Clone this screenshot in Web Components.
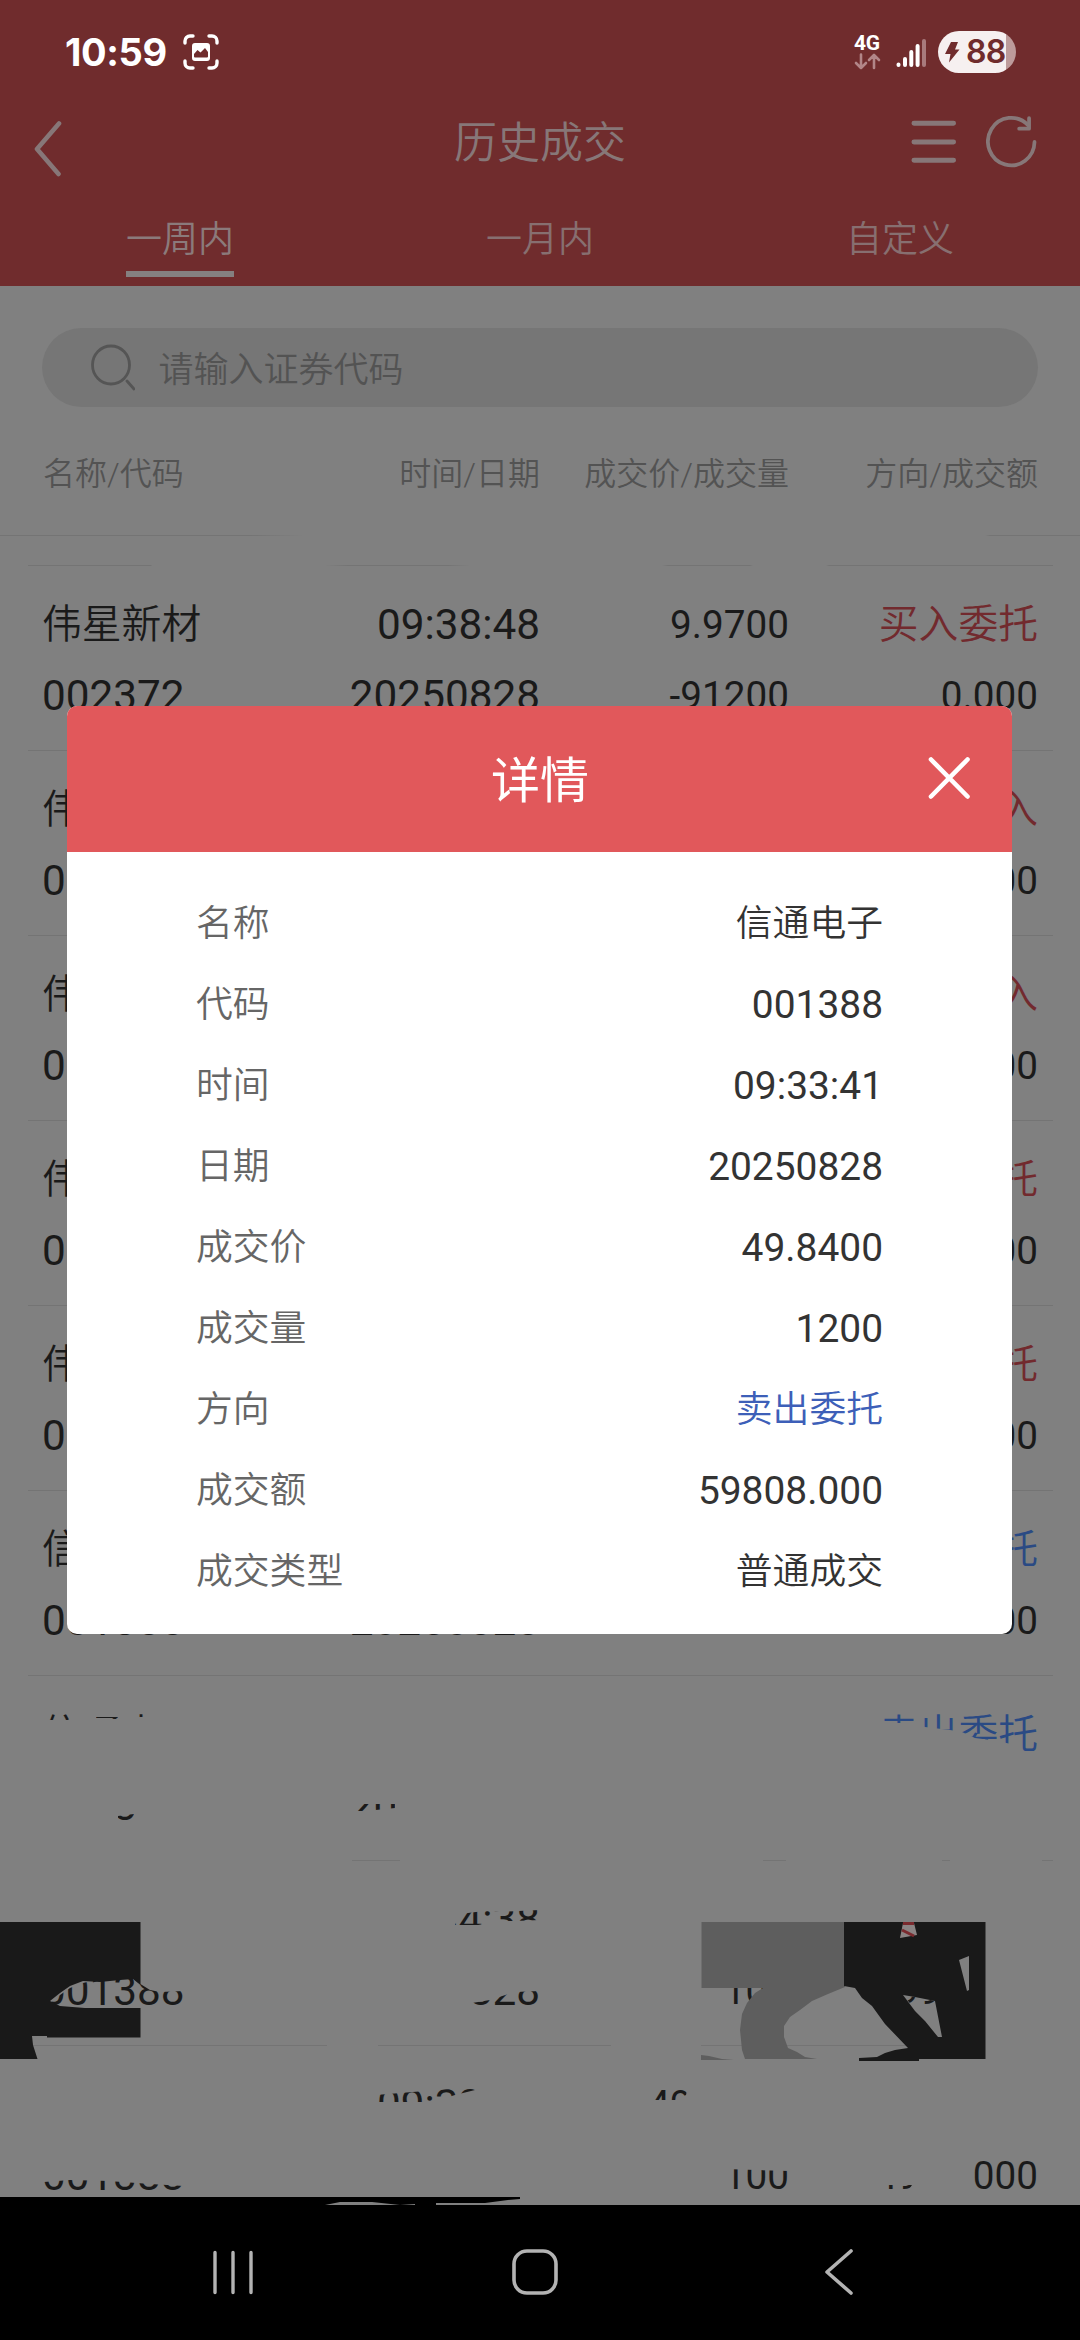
<!DOCTYPE html>
<html lang="zh-CN">
<head>
<meta charset="utf-8">
<title>历史成交</title>
<style>
html,body{margin:0;padding:0;background:#000}
body{width:1080px;height:2340px;overflow:hidden;font-family:Roboto,"Noto Sans CJK SC",sans-serif}
</style>
</head>
<body>
<trade-app></trade-app>
<script>
function define(name, html){
  const t=document.createElement('template');
  t.innerHTML=html;
  customElements.define(name, class extends HTMLElement{
    constructor(){super();this.attachShadow({mode:'open'}).appendChild(t.content.cloneNode(true));}
  });
}

define('status-bar', `<style>
:host{display:flex;height:104px;box-sizing:border-box;color:#fff;justify-content:space-between;align-items:flex-start;padding:31px 64px 0 65px}
.l,.r{display:flex;height:42px;align-items:center}
.time{font:700 38px/42px Inter,sans-serif;width:104px;letter-spacing:-.4px;white-space:nowrap}
.l svg{margin-left:14px}
.net{width:27px;text-align:center;margin-right:15px}
.net b{display:block;font:700 21px/18px Roboto,sans-serif;letter-spacing:-.3px}
.net svg{display:block;margin:1px auto 0}
.sig{margin-right:12.500px}
.bat{display:flex;align-items:center;width:78px;height:42px;border-radius:21px;background:linear-gradient(90deg,#f6f0f0 67.5px,#bd9b9b 67.5px);color:#702c2d;box-sizing:border-box;padding-left:6px;font:600 32px/42px Inter,sans-serif;letter-spacing:-.8px}
.bat svg{margin-right:6px}
</style>
<div class="l"><span class="time">10:59</span>
<svg width="36" height="36" viewBox="0 0 36 36" fill="none"><path d="M2 9V7a5 5 0 0 1 5-5h3M26 2h3a5 5 0 0 1 5 5v2M34 27v2a5 5 0 0 1-5 5h-3M10 34H7a5 5 0 0 1-5-5v-2" stroke="#fff" stroke-width="3.4" stroke-linecap="round"/><path fill-rule="evenodd" fill="#fff" d="M12 9h12a3 3 0 0 1 3 3v12a3 3 0 0 1-3 3H12a3 3 0 0 1-3-3V12a3 3 0 0 1 3-3ZM11 22.500V20l3.500-4 3 2.500 4.500-4.500 3 4v4.500a1 1 0 0 1-1 1H12a1 1 0 0 1-1-1Z"/></svg></div>
<div class="r"><div class="net"><b>4G</b><svg width="27" height="17" viewBox="0 0 27 17" fill="none" stroke="#b28688" stroke-width="2.600" stroke-linecap="round" stroke-linejoin="round"><path d="M7 1.500V15M2 10l5 5 5-5M20 15V2M15 7l5-5 5 5"/></svg></div>
<svg class="sig" width="30" height="32" viewBox="0 0 30 32" stroke-width="4" stroke-linecap="round"><g stroke="#fff"><path d="M2.500 28.500v.5M9 23v6M15.300 16v13M21.600 10v19"/></g><path stroke="#a87a7c" d="M28 5v24"/></svg>
<div class="bat"><svg width="16" height="22" viewBox="0 0 16 22"><path fill="#702c2d" d="M7 1h7l-3 7.500h4.500L5 21.500 6.500 13H1Z"/></svg>88</div></div>`);

define('title-bar', `<style>
:host{display:flex;align-items:center;height:82px;padding:0 43px 0 33px;color:#877778}
.side{display:flex;align-items:center;width:127px}
.side.e{justify-content:flex-end;gap:28px}
.t{flex:1;text-align:center;font-size:43px;line-height:60px;padding-bottom:5px;padding-left:10px;font-weight:350}
svg{display:block}
.e{padding-bottom:7px}
</style>
<div class="side"><svg width="30" height="56" viewBox="0 0 30 56" fill="none" stroke="currentColor" stroke-width="4.600" stroke-linecap="round" stroke-linejoin="round" style="margin-top:8px"><path d="M26 2.500 4 28 25.500 53"/></svg></div>
<div class="t"><slot></slot></div>
<div class="side e"><svg width="48" height="50" viewBox="0 0 48 50" stroke="currentColor" stroke-width="5" stroke-linecap="round"><path d="M4 6h40M4 25h40M4 43.500h40"/></svg>
<svg width="52" height="54" viewBox="0 0 52 54" fill="none" stroke="currentColor" stroke-width="3.800" stroke-linecap="round"><path d="M49 27a23.500 24 0 1 1-6.500-17"/><path d="M43.500 3v10.500H33.500" stroke-linejoin="round"/></svg></div>`);

define('tab-bar', `<style>
:host{display:flex;height:100px;color:#876f70;font-weight:350}
div{flex:1;text-align:center;font-size:36px;line-height:54px}
span{display:inline-block;padding:27px 0 4px;height:54px;border-bottom:6px solid transparent;box-sizing:content-box}
.on span{color:#8b7a7b;border-color:#858080}
</style><div class="on"><span>一周内</span></div><div><span>一月内</span></div><div><span>自定义</span></div>`);

define('search-box', `<style>
:host{display:flex;align-items:center;height:79px;margin:42px 42px 0;border-radius:40px;background:#767676;color:#535353;box-sizing:border-box;padding-left:47px;font-size:35px;line-height:60px;font-weight:350}
svg{margin-right:23.500px}
div{padding-top:6px}
</style><svg width="46" height="48" viewBox="0 0 46 48" fill="none" stroke="#555" stroke-width="2.800" stroke-linecap="round"><ellipse cx="22" cy="21" rx="18.500" ry="19"/><path d="m38 37 7 8"/></svg><div><slot></slot></div>`);

define('list-head', `<style>
:host{display:grid;grid-template-columns:250px 247px 249px 249px;padding:0 42px 0 43px;height:158px;box-sizing:border-box;padding-top:45px;font-size:32px;line-height:44px;color:#535353;font-weight:350;
background:linear-gradient(90deg,#747474 250px,#808080 305px,#808080 985px,#747474 990px) 0 128px/100% 1px no-repeat}
::slotted(*){text-align:right}
::slotted(:first-child){text-align:left}
</style><slot></slot>`);

define('trade-row', `<style>
:host{display:grid;grid-template-columns:251px 247px 249px 249px;margin:0 27px 0 28px;padding:22.500px 14px 0 14px;height:185px;box-sizing:border-box;border-top:1px solid #747474;color:#1a1a1a;line-height:71px;font-size:38.700px}
:host([first]){border-top-color:transparent;background:linear-gradient(90deg,#747474 123px,#808080 124px 297px,#747474 320px 420px,#808080 442px 634px,#747474 640px 722px,#808080 725px 798px,#747474 801px) border-box 0 0/100% 1px no-repeat}
div{text-align:right;display:flex;flex-direction:column;white-space:nowrap}
div.l{text-align:left}
.n{font-size:42.300px}
.c{font-size:39.800px}
.dir{color:#722a2e}
:host([sell]) .dir{color:#2a4a84}
slot{display:block;height:71px}
.c,.dir{font-weight:350}
</style>
<div class="l"><slot class="c" name="name"></slot><slot class="n" name="code"></slot></div>
<div class="n"><slot name="time"></slot><slot name="date"></slot></div>
<div><slot name="price"></slot><slot name="qty"></slot></div>
<div><slot class="c dir" name="dir"></slot><slot name="amt"></slot></div>`);

/* Damaged area at the foot of the list: an erasing layer with windows in it, then the solid blocks. */
define('glitch-layer', `<style>:host{position:absolute;left:0;top:1390px;width:1080px;height:529px;pointer-events:none}svg{display:block}</style>
<svg width="1080" height="529" viewBox="0 1676 1080 529">
<path fill="#808080" fill-rule="evenodd" d="M0 1676H1080V2205H0Z
M44 1712H72V1720H44Z M96 1717H118V1719H96Z M139 1714H144V1717H139Z
M880 1710H1040V1755H1022L1015 1745 998 1741 975 1738 962 1732 950 1730 925 1727 915 1723H880Z
M118 1816 134 1814 134 1822H118Z
M355 1804H395V1808L366 1811H355Z
M352 1860h48v1h-48Z M763 1860h23v1h-23Z M942 1860h8v1h-8Z M1042 1860h11v1h-11Z
M455 1925 460 1914 484 1911 500 1912 540 1910V1920L514 1921H500L478 1925Z
M50 2003 60 1995 70 1988 83 1983 100 1979H133L142 1985 150 1990 160 1992 184 1991V2010H50Z
M472 2003 490 2000 515 1992 540 1991V2008H472Z
M725 1988H765L748 2006H725Z
M903 1995 915 1997 935 2001 942 2037 925 2021Z
M33 2045H327v1H33Z M378 2045H611v1H378Z M701 2045H908v1H701Z
M376 2102V2095L425 2091 475 2087V2090L455 2095 432 2102Z
M650 2086H688L686 2095 675 2100H650Z
M44 2182 70 2180 110 2181 150 2184 184 2186V2192H44Z
M725 2169 789 2171V2192H725Z
M885 2185H912L908 2191H885Z
M974 2162 980 2158H1042V2192H974Z"/>
<path fill="#191919" d="M0 1922H140.500V1985L133 1979 120 1980 100 1982 83 1981 70 1986 60 1993 50 2001 60 2006 85 2008H140.500V2037.500H47V2036H32L33 2045 37.500 2059H0Z"/>
<path fill="#5e5e5e" d="M701.500 1922H845V1987L828 1994 812 2001 800 2010 790 2017 784 2026V2037L788 2048 797 2052 805 2057 817 2059H745L742 2050 740 2030 742 2014 747 2003 755 1993 763 1988H701.500ZM701 2055 709 2056 722 2059 734 2060H701Z"/>
<path fill="#191919" fill-rule="evenodd" d="M844 1922H985.500V2059H919V2061H859V2058L877 2057 885 2053 895 2050 908 2048 885 2024 872 2006 862 1998 855 1988 844 1986ZM959 1960 969 1956V1990L967 1991ZM903 1995 915 1997 935 2001 942 2037H938L925 2021 915 2011Z"/>
<path fill="#8b8484" d="M903 1923H914L917 1935 900 1938Z"/><path d="M903 1923.500H914M902 1930 914 1936" stroke="#7a2a2e" stroke-width="3"/>
<path fill="#000" d="M0 2197H520V2199L508 2200 485 2203 436 2203V2205H415V2204L400 2205 372 2202H340L325 2205H0Z"/>
</svg>`);

define('detail-row', `<style>
:host{display:flex;justify-content:space-between;height:81px;line-height:81px;font-size:36.800px;color:#333;font-weight:350}
.k{color:#666}
.v{color:#333}
:host([num]) .v{font-size:38.900px;font-weight:400}
:host([sell]) .v{color:#3d5fb8}
</style><span class="k"><slot name="k"></slot></span><span class="v"><slot></slot></span>`);

define('detail-modal', `<style>
:host{display:block;position:absolute;left:67px;top:706px;width:945px;height:928px;border-radius:10px;overflow:hidden;background:#fff}
header{display:flex;align-items:center;height:146px;background:#e1585b;color:#fff;padding:0 40px 0 41px;box-sizing:border-box}
h2{flex:1;margin:0;padding-left:46px;text-align:center;font-weight:400;font-size:49px;line-height:80px;padding-top:6px}
main{padding:30.500px 129px 0 129px}
</style><header><h2><slot name="title"></slot></h2><svg width="46" height="46" viewBox="0 0 46 46" stroke="#fff" stroke-width="4.600" stroke-linecap="round"><path d="M5 3.500 41.500 40.500M41.500 3.500 5 40.500"/></svg></header><main><slot></slot></main>`);

define('nav-bar', `<style>:host{display:flex;height:135px;background:#000;padding:0 226px 0 211px;align-items:flex-start;box-sizing:border-box}svg{margin-top:42px}.h{margin-left:255px}.b{margin-left:auto}</style>
<svg width="44" height="50" viewBox="0 0 44 50" stroke="#b3b3b3" stroke-width="3.400" stroke-linecap="round"><path d="M4 5.500v40M22 5.500v40M40 5.500v40"/></svg>
<svg class="h" width="50" height="50" viewBox="0 0 50 50" fill="none" stroke="#b3b3b3" stroke-width="3.600"><rect x="4" y="4" width="42" height="42" rx="13"/></svg>
<svg class="b" width="30" height="50" viewBox="0 0 30 50" fill="none" stroke="#b3b3b3" stroke-width="3.600" stroke-linecap="round" stroke-linejoin="round"><path d="M27 4 3 25l24 21"/></svg>`);

const row=(attr,name,code,time,date,price,qty,dir,amt)=>`<trade-row ${attr}>`+
  Object.entries({name,code,time,date,price,qty,dir,amt}).map(([k,v])=>`<span slot="${k}">${v}</span>`).join('')+`</trade-row>`;
const W='伟星新材', X='信通电子', D='20250828';
const rows=[
 row('first',W,'002372','09:38:48',D,'9.9700','-91200','买入委托','0.000'),
 row('',W,'002372','','','','','证券买入','0.000'),
 row('',W,'002372','','','','','证券买入','0.000'),
 row('',W,'002372','','','','','买入委托','0.000'),
 row('',W,'002372','','','','','买入委托','0.000'),
 row('sell',X,'001388','',D,'','300','卖出委托','14952.000'),
 row('sell',X,'001388','',D,'','','卖出委托',''),
 row('sell','','001388','09:34:38',D,'','100','','4993.000'),
 row('sell','','001388','09:33:41','','49.8400','100','','4984.000')
].join('');
const detail=[['名称',X,''],['代码','001388','num'],['时间','09:33:41','num'],['日期',D,'num'],['成交价','49.8400','num'],['成交量','1200','num'],['方向','卖出委托','sell'],['成交额','59808.000','num'],['成交类型','普通成交','']]
 .map(([k,v,a])=>`<detail-row ${a}><span slot="k">${k}</span>${v}</detail-row>`).join('');

define('trade-app', `<style>
:host{display:flex;flex-direction:column;position:relative;width:1080px;height:2340px;overflow:hidden;background:#808080}
.top{height:286px;background:#702c2d}
.body{flex:1;min-height:0;overflow:hidden;position:relative;display:flex;flex-direction:column}
.body>*{flex-shrink:0}
</style>
<div class="top"><status-bar></status-bar><title-bar>历史成交</title-bar><tab-bar></tab-bar></div>
<div class="body"><search-box>请输入证券代码</search-box>
<list-head><span>名称/代码</span><span>时间/日期</span><span>成交价/成交量</span><span>方向/成交额</span></list-head>
${rows}<glitch-layer></glitch-layer></div>
<nav-bar></nav-bar>
<detail-modal><span slot="title">详情</span>${detail}</detail-modal>`);
</script>
</body>
</html>
